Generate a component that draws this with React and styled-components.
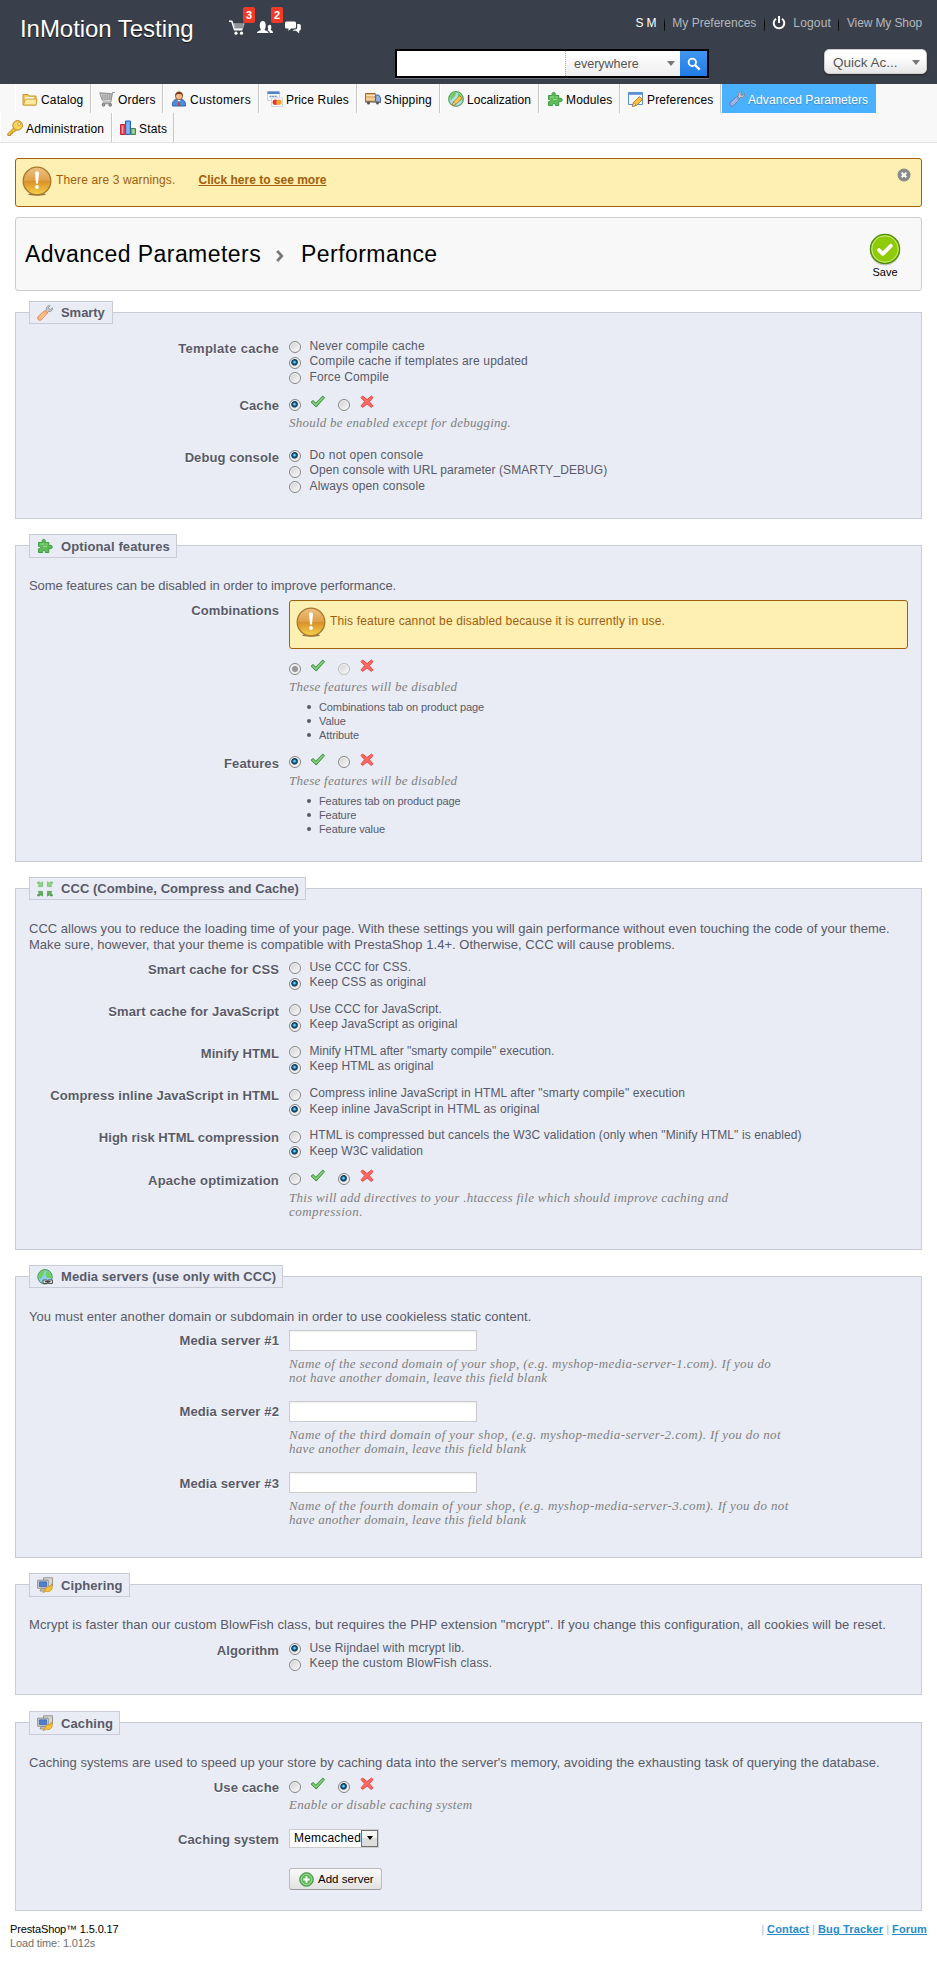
import React from 'react';
import styled, { createGlobalStyle, css } from 'styled-components';

const GlobalStyle = createGlobalStyle`
  * { box-sizing: border-box; }
  body {
    margin: 0;
    background: #fff;
    color: #585a69;
    font: 12px "Liberation Sans", Arial, sans-serif;
  }
`;

const c = {
  text: '#585a69',
  panel: '#e9ecf4',
  panelLine: '#c9ccd8',
  warn: '#a0600c',
};

const Track = styled.span`
  white-space: nowrap;
  letter-spacing: ${(p) => p.$ls || 0}px;
`;

/* ---------- header ---------- */

const Header = styled.header`
  height: 84px;
  background: #3a404b;
  display: flex;
  flex-direction: column;
`;

const HeaderTop = styled.div`
  height: 49px;
  display: flex;
  align-items: flex-start;
  padding: 15px 15px 0 20px;
`;

const ShopName = styled.h1`
  margin: 0;
  width: 209px;
  font-weight: normal;
  font-size: 24px;
  line-height: 28px;
  letter-spacing: -0.05px;
  color: #fff;
  text-shadow: 0 1px 1px #111;
  white-space: nowrap;
`;

const Notices = styled.div`
  display: flex;
  gap: 12px;
  padding-top: 5px;
  flex: 1;
`;

const Notice = styled.div`
  position: relative;
  width: 16px;
  height: 16px;
`;

const Badge = styled.span`
  position: absolute;
  left: 14px;
  top: -13px;
  width: 12px;
  height: 16px;
  border-radius: 2px;
  background: #f13b26;
  color: #fff;
  font: bold 11px/16px "Liberation Sans", Arial, sans-serif;
  text-align: center;
`;

const UserLinks = styled.div`
  display: flex;
  align-items: center;
  height: 16px;
  line-height: 16px;
  color: #b4b7bc;
`;

const UserName = styled.span`
  color: #fff;
  margin-right: 8px;
  letter-spacing: -0.2px;
`;

const Divider = styled.i`
  width: 1px;
  height: 14px;
  margin: 2px ${(p) => p.$right || 7}px 0 0;
  background: linear-gradient(#3a404b, #000 50%, #15181c);
`;

const UserLink = styled.a`
  white-space: nowrap;
  letter-spacing: ${(p) => p.$ls || 0}px;
  margin-right: ${(p) => p.$after || 0}px;
`;

const HeaderBottom = styled.div`
  display: flex;
  align-items: flex-start;
  justify-content: space-between;
  padding: 0 10px 0 395px;
`;

const Search = styled.div`
  display: flex;
  width: 314px;
  height: 29px;
  border: 2px solid #000;
  background: #fff;
  box-shadow: 0 1px 0 #6b7078;
`;

const SearchInput = styled.div`
  width: 168px;
  background: #fff;
`;

const Scope = styled.div`
  display: flex;
  align-items: center;
  flex: 1;
  padding: 0 5px 0 8px;
  justify-content: space-between;
  border-left: 1px dotted #aaa;
  background: linear-gradient(#fff, #eee);
  color: #555;
  font-size: 12.5px;
`;

const Caret = styled.i`
  border: 4px solid transparent;
  border-top: 5px solid #777;
  border-bottom: 0;
`;

const SearchButton = styled.div`
  width: 27px;
  display: grid;
  place-items: center;
  background: linear-gradient(#4196ee, #1f7be6);
`;

const QuickAccess = styled.div`
  width: 103px;
  height: 25px;
  display: flex;
  align-items: center;
  justify-content: space-between;
  padding: 1px 6px 0 8px;
  border: 1px solid #ccc;
  border-radius: 5px;
  background: linear-gradient(#fff 30%, #e6e6e6);
  color: #555;
  font-size: 13.5px;
  box-shadow: 0 1px 2px #222;
`;

/* ---------- navigation ---------- */

const Nav = styled.nav`
  height: 59px;
  background: #f8f8f8;
  border-bottom: 1px solid #e3e3e3;
`;

const NavRow = styled.div`
  display: flex;
  height: 29px;
  padding-left: ${(p) => p.$left}px;
`;

const NavItem = styled.a`
  display: flex;
  align-items: center;
  gap: 3px;
  width: ${(p) => p.$w}px;
  padding: 2px 0 0 ${(p) => p.$pad || 8}px;
  border-right: 1px solid #c8c8c8;
  box-shadow: inset 1px 0 0 #fff;
  color: #000;
  white-space: nowrap;
  letter-spacing: ${(p) => p.$ls ?? 0.15}px;
  svg { flex: none; margin-top: -1px; }
  ${(p) => p.$active && css`
    margin-left: 1px;
    padding-left: 7px;
    border: 0;
    box-shadow: none;
    background: #49b1ff;
    color: #fff;
    text-shadow: 0 1px 1px #4a86b8;
  `}
`;

/* ---------- content ---------- */

const Content = styled.main`
  padding: 15px 15px 0;
`;

const AlertBox = styled.div`
  display: flex;
  align-items: flex-start;
  height: 49px;
  padding: ${(p) => (p.$inner ? 6 : 7)}px 10px 0 6px;
  border: 1px solid ${c.warn};
  border-radius: 3px;
  background: #feefb3;
  color: ${c.warn};
  line-height: 16px;
`;

const AlertText = styled.span`
  margin: 6px 0 0 4px;
  white-space: nowrap;
  letter-spacing: ${(p) => p.$ls}px;
`;

const AlertLink = styled.a`
  margin: 6px auto 0 23px;
  font-weight: bold;
  text-decoration: underline;
  white-space: nowrap;
`;

const CloseSlot = styled.span`
  display: flex;
  margin-top: 2px;
`;

const TitleBar = styled.div`
  display: flex;
  align-items: flex-start;
  height: 74px;
  margin: 10px 0 21px;
  padding: 22px 19px 0 9px;
  border: 1px solid #ccc;
  border-radius: 3px;
  background: #f8f8f8;
  color: #000;
`;

const Crumb = styled.span`
  width: ${(p) => p.$w}px;
  font-size: 23px;
  line-height: 28px;
  letter-spacing: 0.45px;
  text-shadow: 0 1px 0 #fff;
  white-space: nowrap;
`;

const Chevron = styled.svg`
  margin: 10px 17px 0 0;
`;

const SaveButton = styled.div`
  display: flex;
  flex-direction: column;
  align-items: center;
  width: 34px;
  margin: -7px 0 0 auto;
  font-size: 11px;
  line-height: 13px;
`;

const Panel = styled.section`
  height: ${(p) => p.$h}px;
  margin-bottom: ${(p) => p.$after}px;
  padding: 0 13px;
  border: 1px solid ${c.panelLine};
  background: ${c.panel};
`;

const LegendSlot = styled.div`
  display: flex;
  align-items: flex-start;
  height: ${(p) => (p.$plain ? 36.5 : 44)}px;
  margin-top: -12px;
`;

const Legend = styled.div`
  display: flex;
  align-items: center;
  width: ${(p) => p.$w}px;
  height: ${(p) => p.$tall ? 24 : 23}px;
  padding-left: 7px;
  border: 1px solid ${c.panelLine};
  background: ${c.panel};
  font-weight: bold;
  font-size: 13px;
  white-space: nowrap;
  letter-spacing: ${(p) => p.$ls}px;
  svg { flex: none; margin-right: 8px; }
`;

const Intro = styled.p`
  margin: 0 0 ${(p) => p.$after || 6.5}px;
  font-size: 13px;
  line-height: 16px;
`;

const Row = styled.div`
  display: grid;
  grid-template-columns: 250px 1fr;
  column-gap: 10px;
  margin-bottom: 11.2px;
`;

const Label = styled.div`
  padding-top: 3.2px;
  text-align: right;
  font-weight: bold;
  font-size: 13px;
  line-height: 16px;
  white-space: nowrap;
  letter-spacing: ${(p) => p.$ls ?? 0.09}px;
  text-shadow: 0 1px 0 #fff;
`;

const Option = styled.div`
  display: flex;
  gap: 8.5px;
  height: 15.5px;
  line-height: 16.5px;
`;

const Toggle = styled.div`
  display: flex;
  height: 15.5px;
  margin-top: ${(p) => p.$top || 0}px;
`;

const IconSlot = styled.span`
  display: flex;
  margin: 0 ${(p) => p.$r}px 0 ${(p) => p.$l}px;
`;

const Dot = styled.i`
  flex: none;
  width: 12px;
  height: 12px;
  margin-top: 3.5px;
  border: 1px solid ${(p) => (p.$off ? '#bbb' : '#858585')};
  border-radius: 50%;
  box-shadow: inset 0 0 0 1px #f6f6f6;
  background: ${(p) =>
    p.$on
      ? p.$off
        ? 'radial-gradient(circle at 50% 50%, #999 0 2.6px, #eee 3.6px)'
        : 'radial-gradient(circle at 45% 42%, #7fd0f0 0 0.6px, #1a6c9c 1.6px, #0c3350 2.8px, #e8e8e8 3.9px)'
      : 'linear-gradient(135deg, #cfcfcf, #fbfbfb)'};
  ${(p) => p.$on && p.$off && css`border-color: #858585;`}
`;

const HintLines = styled.div`
  margin: ${(p) => (p.$tight ? 5.2 : 5.7)}px 0 ${(p) => (p.$tight ? 0 : 5.3)}px;
  color: #7f7f7f;
  font: italic 13px/14px "Liberation Serif", Georgia, serif;
`;

const HintLine = styled.div`
  white-space: nowrap;
  letter-spacing: ${(p) => p.$ls ?? 0.27}px;
`;

const Bullets = styled.ul`
  margin: 6px 0 0;
  padding: 0 0 0 18px;
  list-style: none;
  font-size: 11px;
  line-height: 14px;
  letter-spacing: -0.1px;
`;

const Bullet = styled.li`
  display: flex;
  align-items: center;
  gap: 8px;
  &::before {
    content: "";
    width: 4px;
    height: 4px;
    border-radius: 50%;
    background: ${c.text};
  }
`;

const TextInput = styled.div`
  width: 188px;
  height: 21px;
  border: 1px solid #ccc;
  background: #fff;
  box-shadow: inset 0 1px 2px #eee;
`;

const SelectBox = styled.div`
  display: flex;
  align-items: center;
  justify-content: space-between;
  width: 90px;
  height: 19px;
  margin-bottom: 20.5px;
  padding-left: 4px;
  border: 1px solid #ccc;
  background: #fff;
  color: #000;
  letter-spacing: 0.18px;
`;

const SelectArrow = styled.i`
  display: grid;
  place-items: center;
  width: 17px;
  height: 17px;
  border: 1px solid #707070;
  background: linear-gradient(#f4f4f4 50%, #ddd 50%);
  &::after {
    content: "";
    border: 3.5px solid transparent;
    border-top: 4px solid #000;
    border-bottom: 0;
  }
`;

const AddButton = styled.div`
  display: flex;
  align-items: center;
  gap: 4px;
  width: 93px;
  height: 22px;
  padding-left: 9px;
  border: 1px solid #bbb;
  border-bottom-color: #999;
  border-radius: 3px;
  background: linear-gradient(#fafafa, #e2e2e2);
  color: #000;
  font-size: 11.5px;
  white-space: nowrap;
`;

const Footer = styled.footer`
  display: flex;
  justify-content: space-between;
  padding: 11px 10px 0;
  font-size: 11px;
  line-height: 14px;
`;

const Version = styled.div`
  color: #000;
  letter-spacing: -0.14px;
`;

const LoadTime = styled.div`
  color: #6f6f6f;
  letter-spacing: -0.14px;
`;

const FooterLinks = styled.div`
  display: flex;
  gap: 3px;
  color: #8cc3ea;
  a {
    color: #268ccd;
    font-weight: bold;
    text-decoration: underline;
    letter-spacing: 0.15px;
  }
`;

/* ---------- icons ---------- */

const Svg = ({ s = 16, children, ...rest }) => (
  <svg width={s} height={s} viewBox="0 0 16 16" fill="none" {...rest}>{children}</svg>
);

const Folder = () => (
  <Svg>
    <path d="M1 3.5h5l1 1.5h7v9H1z" fill="#f5c95a" stroke="#c9962a" />
    <path d="M3 7h9" stroke="#fff" strokeWidth="2" />
    <path d="M1.5 14l1.800-6H15l-1 6z" fill="#fde9a0" stroke="#d3a23a" />
  </Svg>
);
const CartGray = () => (
  <Svg>
    <path d="M.5 1.800l12 .8M15.800 1.500h-2.300l-1.700 9.500H3.800" stroke="#8a8a8a" />
    <path d="M.8 2.500l2.400 6.700 8.600-.6 1-5.400z" fill="#dcdcdc" stroke="#999" />
    <path d="M3.800 3v6M6 3v6M8.200 3v6M10.400 3v5.600M1.600 5h10.800M2.200 7h9.800" stroke="#909090" strokeWidth=".7" />
    <path d="M3 12.500h9.500" stroke="#999" strokeWidth="1.500" />
    <circle cx="4.500" cy="14" r="1.300" fill="#aaa" stroke="#777" />
    <circle cx="11.200" cy="14" r="1.300" fill="#aaa" stroke="#777" />
  </Svg>
);
const Customer = () => (
  <Svg>
    <path d="M1.500 15c-.6-4 1.500-6.500 4-6.500h4.500c3 0 5 2.500 4.500 6.500z" fill="#4a8fd8" stroke="#2a62a8" />
    <path d="M6 8.500l2 2.500 2-2.500z" fill="#fff" />
    <path d="M7.500 10.500h1l.7 3.500L8 15l-1.200-1z" fill="#d33" />
    <circle cx="8" cy="5.200" r="3.600" fill="#f0b98a" stroke="#8a4a20" strokeWidth=".8" />
    <path d="M4 5c0-3 2-4.600 4-4.600S12 2 12 5c-1-1.600-2-2-4-2S5 3.400 4 5z" fill="#7a3c14" />
  </Svg>
);
const Cards = () => (
  <Svg>
    <path d="M.5.5h12v9h-12z" fill="#f4f7fc" stroke="#c8d4e4" />
    <path d="M.5.5h12v2.500h-12z" fill="#4f83c6" />
    <path d="M2.500 5.500h8" stroke="#6c93cc" strokeWidth="1.300" strokeDasharray="2 .6" />
    <path d="M4.500 7h11v8.500h-11z" fill="#fff" stroke="#d4d7da" />
    <circle cx="8.300" cy="11.200" r="2.700" fill="#e8352c" />
    <circle cx="12" cy="11.200" r="2.700" fill="#f6a32a" />
  </Svg>
);
const Truck = () => (
  <Svg>
    <path d="M.5 2.500h9.700v8H.5z" fill="#e8b678" stroke="#9a6a34" />
    <path d="M1 4.500h9M1 8h9" stroke="#fbe3c0" strokeWidth="1.200" />
    <path d="M10.700 4h3l1.800 3v4.500h-4.800z" fill="#8fb3e4" stroke="#3f66a8" />
    <path d="M0 11h15.500" stroke="#777" strokeWidth="1.200" />
    <circle cx="3.500" cy="12" r="1.500" fill="#555" /><circle cx="12.500" cy="12" r="1.500" fill="#555" />
  </Svg>
);
const Globe = () => (
  <Svg>
    <circle cx="8" cy="8" r="7.300" fill="#a9dff0" stroke="#5aa653" strokeWidth="1.300" />
    <path d="M2 5c2-3.500 5-4 6.500-3.600L7 5 4 8 2.600 10zM10 2c3 1.500 4.500 4 4 7l-2 1-2-3z" fill="#74c95e" />
    <path d="M4.500 14.500l1-3.600 6.200-6.200 2.400 2.400-6.200 6.200z" fill="#ffc84a" stroke="#b57a18" strokeWidth=".9" />
    <path d="M4.500 14.500l1-3.600 2.400 2.400z" fill="#fbe6c2" stroke="#8a6a3a" strokeWidth=".6" />
  </Svg>
);
const Puzzle = () => (
  <Svg>
    <path
      d="M1.500 4.500h3.700V3.200C4.500.8 8.800.8 8.200 3.200v1.300h3.600v3.200c1-.6 3.400-.8 3.400 1.300 0 2-2.200 1.900-3.400 1.300v4.200H8.300c.4-2.800-3-2.800-2.600 0H1.500v-3.700c2.500.6 2.500-3.100 0-2.500z"
      fill="#5fba5a" stroke="#3c9a42"
    />
    <path d="M3 6h4M8.500 6h2M6 8.500h4" stroke="#9ade8e" />
  </Svg>
);
const Prefs = () => (
  <Svg>
    <path d="M.5 1.500h14v12H.5z" fill="#f5f9ff" stroke="#5a8fd6" />
    <path d="M.5 1.500h14v2.300H.5z" fill="#5a8fd6" />
    <path d="M4.500 15.300l1-3.800 6-6 3 3-6 6z" fill="#ffbe3c" stroke="#b57a18" strokeWidth=".9" />
    <path d="M4.500 15.300l1-3.800 2.800 2.800z" fill="#fbe6c2" stroke="#8a6a3a" strokeWidth=".6" />
  </Svg>
);
const Tools = ({ handle = '#fbb078', edge = '#e58a4a', steel = '#c6cace', line = '#858b90' }) => (
  <Svg>
    <path d="M7.300 7.200L9.500 5C8.600 2.500 10.500.3 13.200.7l-1.700 2 .6 1.400 1.500.3L15.600 2.800c.3 2.500-1.700 4.200-4 3.800L8.800 9z" fill={steel} stroke={line} strokeWidth=".8" />
    <path d="M1 11.700L6.500 6.400a2 2 0 0 1 3 3L4.200 14.900c-1.900 1.600-4.700-1.200-3.200-3.200z" fill={handle} stroke={edge} strokeWidth=".9" />
    <path d="M2.800 12.300l5-4.800M4.200 13.500l4.500-4.500" stroke="#fff" strokeOpacity=".5" strokeWidth=".8" />
  </Svg>
);
const Key = () => (
  <Svg>
    <path d="M7.500 7L.8 13.800v1.600h3v-1.700h1.600v-1.600H7l2.800-2.400z" fill="#f4c53c" stroke="#a87414" strokeWidth=".8" />
    <circle cx="10.600" cy="5.400" r="4.800" fill="#fbd552" stroke="#b07c18" strokeWidth=".9" />
    <circle cx="12.200" cy="3.900" r="1.400" fill="#fff" stroke="#b07c18" strokeWidth=".7" />
  </Svg>
);
const Bars = () => (
  <Svg>
    <path d="M.5 4.500h4.500v10H.5z" fill="#f0566a" stroke="#c42438" />
    <path d="M5.500 1h5v13.500h-5z" fill="#62a4f0" stroke="#2467c0" />
    <path d="M11 8.500h4.500v6H11z" fill="#8fc48a" stroke="#3f8a42" />
    <path d="M2.500 6v7M8 3v10M13.300 10v3" stroke="#fff" strokeOpacity=".4" />
  </Svg>
);
const Shrink = () => (
  <Svg>
    <g fill="#8ed67c" stroke="#5fb257" strokeWidth=".6">
      <path d="M.6 1h2l1.200 1.200L5.500.8V5.600H1.200L2.400 4 .6 2.400zM15.400 1h-2l-1.200 1.200L10.500.8V5.600h4.300L13.600 4l1.800-1.600z" />
    </g>
    <g fill="#5fae5a" stroke="#3c8841" strokeWidth=".6">
      <path d="M.6 15h2l1.200-1.200 1.700 1.400V10.400H1.200L2.400 12 .6 13.600zM15.400 15h-2l-1.200-1.200-1.700 1.400V10.400h4.300L13.600 12l1.800 1.600z" />
    </g>
  </Svg>
);
const WorldLink = () => (
  <Svg>
    <circle cx="8" cy="7.800" r="7.200" fill="#8ccdf0" stroke="#3f8f3f" />
    <path d="M1.500 6c1-3.500 4-5 6.500-5L6.500 5 4 10l-2-1zM9.500 2c3.500 1 5.300 4 5 7h-4l-2-3z" fill="#6fd05a" />
    <path d="M6 11h4.300v3.500H6zM11.200 11h4.300v3.500h-4.300z" fill="#ddd" stroke="#555" />
    <path d="M8 12.700h5.500" stroke="#333" strokeWidth="1.100" />
  </Svg>
);
const Computers = () => (
  <Svg>
    <path d="M6.500.8h9v8.500h-9z" fill="#d6d6d2" stroke="#96968e" />
    <path d="M9 10h6v3H9z" fill="#b8b8b0" />
    <path d="M.7 3.200h10.500v8H.7z" fill="#e6e6e2" stroke="#8a8a84" />
    <path d="M2.300 4.800h7.300v4.800H2.300z" fill="#4f7fd0" stroke="#2f57a0" strokeWidth=".7" />
    <path d="M3 14l1-2.300h4.500l1 2.300z" fill="#c8c8c0" stroke="#85857d" strokeWidth=".8" />
    <path d="M6 15.500l4.500-6 2 .5 2.500-3.300v5.500l-2.500 2.300-3-.3z" fill="#fbc437" stroke="#d09018" strokeWidth=".8" />
  </Svg>
);
const Check = () => (
  <svg width="16" height="14" viewBox="0 0 16 14">
    <path d="M1 7.200l2-1.700 2.800 2.600L12.800 1l1.800 1.600L6.200 12z" fill="#6cbd64" stroke="#3c9543" />
    <path d="M2.500 7l3.300 3L13.200 2.300" fill="none" stroke="#a4df98" strokeWidth=".8" />
  </svg>
);
const Cross = () => (
  <svg width="14" height="14" viewBox="0 0 14 14">
    <path d="M1 2.600L2.600 1 7 4.600 11.400 1 13 2.600 9.400 6.700l3.600 4.200-1.600 1.600L7 8.900l-4.400 3.600L1 10.900l3.600-4.200z" fill="#fa6a64" stroke="#ee4545" />
  </svg>
);
const WarnIcon = () => (
  <svg width="30" height="30" viewBox="0 0 30 30">
    <defs>
      <linearGradient id="amber" x1="0" y1="0" x2="0" y2="1">
        <stop offset="0" stopColor="#eec284" /><stop offset=".48" stopColor="#dfa047" />
        <stop offset=".52" stopColor="#d8922a" /><stop offset="1" stopColor="#f8d04a" />
      </linearGradient>
    </defs>
    <ellipse cx="15" cy="28.300" rx="9" ry="1.400" fill="#8a7a50" />
    <circle cx="15" cy="15" r="13.800" fill="url(#amber)" stroke="#a8792c" strokeWidth="1.300" />
    <path d="M13 6.800c0-1.600 4-1.600 4 0L16 17.500h-2z" fill="#fff" />
    <circle cx="15" cy="21" r="1.900" fill="#fff" />
  </svg>
);
const CloseIcon = () => (
  <svg width="14" height="14" viewBox="0 0 14 14">
    <circle cx="7" cy="7" r="6.500" fill="#8a8a8a" />
    <path d="M4.700 4.700l4.600 4.600M9.300 4.700L4.700 9.300" stroke="#fff" strokeWidth="2" />
  </svg>
);
const SaveIcon = () => (
  <svg width="32" height="33" viewBox="0 0 32 33">
    <ellipse cx="16" cy="18" rx="15" ry="14.500" fill="#ccc" />
    <circle cx="16" cy="16" r="14.600" fill="#8fcb0a" stroke="#4f8f10" strokeWidth="1.300" />
    <circle cx="16" cy="16" r="13.200" fill="none" stroke="#cdea7a" strokeWidth="1" />
    <path d="M10 17l3.800 3.800 8-8" fill="none" stroke="#fff" strokeWidth="3.800" strokeLinecap="round" strokeLinejoin="round" />
  </svg>
);
const PlusIcon = () => (
  <svg width="15" height="15" viewBox="0 0 15 15">
    <circle cx="7.500" cy="7.500" r="6.800" fill="#62b85c" stroke="#3f9442" />
    <circle cx="7.500" cy="7.500" r="5.300" fill="none" stroke="#b4e2ac" strokeWidth=".8" />
    <path d="M7.500 4.300v6.400M4.300 7.500h6.400" stroke="#fff" strokeWidth="2" />
  </svg>
);
const CartWhite = () => (
  <Svg>
    <path d="M0 1.200h2.800l2.700 8.600h8" stroke="#fff" strokeWidth="1.500" />
    <path d="M4 3.500h11.500L13.800 9H5.600z" fill="#e8e8e8" />
    <path d="M4.500 5h10.500M5 7h9.500M7 3.500v5M9 3.500v5M11 3.500v5M13 3.500v5" stroke="#3a404b" strokeWidth=".6" />
    <circle cx="7" cy="13.200" r="1.600" fill="#fff" /><circle cx="12.500" cy="13.200" r="1.600" fill="#fff" />
  </Svg>
);
const People = () => (
  <Svg>
    <path d="M0 13c0-2 2.800-2 4-3-1.700-2.700-2-9 1.800-9s3.500 6.300 1.700 9C8.700 11 11.500 11 11.500 13zM12.800 13c0-1.700-1-2.300-2.300-2.800 1-1.500.5-2.200.3-3.200-.3-2 2.700-3.500 3.400-1 .4 1.600 0 2.800-.6 3.800.6.800 2.400.9 2.400 3.200z" fill="#fff" />
  </Svg>
);
const Chat = () => (
  <Svg>
    <path d="M1.500 1.500h8q1.500 0 1.500 1.500v4q0 1.500-1.500 1.500H6L3.500 11V8.500h-2Q0 8.500 0 7V3q0-1.500 1.500-1.500z" fill="#fff" />
    <path d="M12.200 4H14q1.800 0 1.800 1.500V9q0 1.700-1.600 1.700V13.500L11 10.700H7.500l1.800-1.200h1.200q1.700 0 1.700-1.700z" fill="#fff" />
  </Svg>
);
const Power = () => (
  <svg width="14" height="14" viewBox="0 0 14 14">
    <path d="M4 2.700a5.300 5.300 0 1 0 6 0" fill="none" stroke="#fff" strokeWidth="2" />
    <path d="M7 0v7" stroke="#fff" strokeWidth="2" />
  </svg>
);
const Magnifier = () => (
  <svg width="14" height="14" viewBox="0 0 14 14" fill="none" stroke="#fff">
    <circle cx="5.300" cy="5.300" r="3.700" strokeWidth="1.800" />
    <path d="M8 8l4.700 4.700" strokeWidth="2.400" />
  </svg>
);

/* ---------- composed parts ---------- */

const Radios = ({ items }) => items.map(([text, on, ls]) => (
  <Option key={text}><Dot $on={on} /><Track $ls={ls ?? 0.12}>{text}</Track></Option>
));

const YesNo = ({ yes, off, top }) => (
  <Toggle $top={top}>
    <Dot $on={yes} $off={off} />
    <IconSlot $l={9} $r={12}><Check /></IconSlot>
    <Dot $on={!yes} $off={off} />
    <IconSlot $l={10} $r={0}><Cross /></IconSlot>
  </Toggle>
);

const Hint = ({ lines, tight }) => (
  <HintLines $tight={tight}>
    {lines.map(([t, ls]) => <HintLine key={t} $ls={ls}>{t}</HintLine>)}
  </HintLines>
);

const Fieldset = ({ icon, title, w, ls, tall, plain, h, after, children }) => (
  <Panel $h={h} $after={after}>
    <LegendSlot $plain={plain}>
      <Legend $w={w} $ls={ls} $tall={tall}>{icon}{title}</Legend>
    </LegendSlot>
    {children}
  </Panel>
);

const Field = ({ label, ls, children }) => (
  <Row><Label $ls={ls}>{label}</Label><div>{children}</div></Row>
);

const cccRows = [
  ['Smart cache for CSS', [['Use CCC for CSS.', false, 0.15], ['Keep CSS as original', true]], 0.13],
  ['Smart cache for JavaScript', [['Use CCC for JavaScript.', false, 0.07], ['Keep JavaScript as original', true, 0.1]], 0.12],
  ['Minify HTML', [['Minify HTML after "smarty compile" execution.', false, 0], ['Keep HTML as original', true]]],
  ['Compress inline JavaScript in HTML', [['Compress inline JavaScript in HTML after "smarty compile" execution', false, 0.11], ['Keep inline JavaScript in HTML as original', true]], 0.1],
  ['High risk HTML compression', [['HTML is compressed but cancels the W3C validation (only when "Minify HTML" is enabled)', false, 0.1], ['Keep W3C validation', true, 0.08]], 0.02],
];

const servers = [
  ['Media server #1', [['Name of the second domain of your shop, (e.g. myshop-media-server-1.com). If you do', 0.38], ['not have another domain, leave this field blank', 0.29]]],
  ['Media server #2', [['Name of the third domain of your shop, (e.g. myshop-media-server-2.com). If you do not', 0.38], ['have another domain, leave this field blank', 0.29]]],
  ['Media server #3', [['Name of the fourth domain of your shop, (e.g. myshop-media-server-3.com). If you do not', 0.385], ['have another domain, leave this field blank', 0.29]]],
];

export default function App() {
  return (
    <>
      <GlobalStyle />
      <Header>
        <HeaderTop>
          <ShopName>InMotion Testing</ShopName>
          <Notices>
            <Notice><CartWhite /><Badge>3</Badge></Notice>
            <Notice><People /><Badge>2</Badge></Notice>
            <Notice><Chat /></Notice>
          </Notices>
          <UserLinks>
            <UserName>S M</UserName>
            <Divider />
            <UserLink $after={8}>My Preferences</UserLink>
            <Divider />
            <Power />
            <UserLink $ls={0.15} $after={7}>&nbsp;&nbsp;Logout</UserLink>
            <Divider $right={8} />
            <UserLink $ls={-0.12}>View My Shop</UserLink>
          </UserLinks>
        </HeaderTop>
        <HeaderBottom>
          <Search>
            <SearchInput />
            <Scope>everywhere<Caret /></Scope>
            <SearchButton><Magnifier /></SearchButton>
          </Search>
          <QuickAccess>Quick Ac...<Caret /></QuickAccess>
        </HeaderBottom>
      </Header>

      <Nav>
        <NavRow $left={15}>
          <NavItem $w={76} $pad={7}><Folder />Catalog</NavItem>
          <NavItem $w={72}><CartGray />Orders</NavItem>
          <NavItem $w={96} $ls={0.33}><Customer />Customers</NavItem>
          <NavItem $w={98}><Cards />Price Rules</NavItem>
          <NavItem $w={83}><Truck />Shipping</NavItem>
          <NavItem $w={99} $ls={0.05}><Globe />Localization</NavItem>
          <NavItem $w={81}><Puzzle />Modules</NavItem>
          <NavItem $w={101}><Prefs />Preferences</NavItem>
          <NavItem $w={154} $ls={0.07} $active>
            <Tools handle="#8fa8e0" edge="#5f78b8" steel="#c8c4c4" line="#8a7f7f" />Advanced Parameters
          </NavItem>
        </NavRow>
        <NavRow $left={0}>
          <NavItem $w={112} $pad={7}><Key />Administration</NavItem>
          <NavItem $w={62}><Bars />Stats</NavItem>
        </NavRow>
      </Nav>

      <Content>
        <AlertBox>
          <WarnIcon />
          <AlertText $ls={0.13}>There are 3 warnings.</AlertText>
          <AlertLink>Click here to see more</AlertLink>
          <CloseSlot><CloseIcon /></CloseSlot>
        </AlertBox>

        <TitleBar>
          <Crumb $w={251}>Advanced Parameters</Crumb>
          <Chevron width="8" height="12" viewBox="0 0 8 12">
            <path d="M1.200 1L5.800 6 1.200 11" fill="none" stroke="#777" strokeWidth="2.700" />
          </Chevron>
          <Crumb $w={150}>Performance</Crumb>
          <SaveButton><SaveIcon />Save</SaveButton>
        </TitleBar>

        <Fieldset icon={<Tools />} title="Smarty" w={84} ls={-0.05} plain h={207} after={26}>
          <Field label="Template cache" ls={0.3}>
            <Radios items={[['Never compile cache', false, 0.17], ['Compile cache if templates are updated', true, 0.185], ['Force Compile', false]]} />
          </Field>
          <Field label="Cache">
            <YesNo yes />
            <Hint lines={[['Should be enabled except for debugging.', 0.25]]} />
          </Field>
          <Field label="Debug console">
            <Radios items={[['Do not open console', true, 0.2], ['Open console with URL parameter (SMARTY_DEBUG)', false, 0.08], ['Always open console', false, 0.15]]} />
          </Field>
        </Fieldset>

        <Fieldset icon={<Puzzle />} title="Optional features" w={148} ls={0.12} tall h={317} after={26}>
          <Intro $after={6}><Track $ls={-0.07}>Some features can be disabled in order to improve performance.</Track></Intro>
          <Field label="Combinations">
            <AlertBox $inner>
              <WarnIcon />
              <AlertText $ls={0.15}>This feature cannot be disabled because it is currently in use.</AlertText>
            </AlertBox>
            <YesNo yes off top={10} />
            <Hint tight lines={[['These features will be disabled', 0.25]]} />
            <Bullets>
              <Bullet>Combinations tab on product page</Bullet>
              <Bullet>Value</Bullet>
              <Bullet>Attribute</Bullet>
            </Bullets>
          </Field>
          <Field label="Features">
            <YesNo yes />
            <Hint tight lines={[['These features will be disabled', 0.25]]} />
            <Bullets>
              <Bullet>Features tab on product page</Bullet>
              <Bullet>Feature</Bullet>
              <Bullet>Feature value</Bullet>
            </Bullets>
          </Field>
        </Fieldset>

        <Fieldset icon={<Shrink />} title="CCC (Combine, Compress and Cache)" w={277} ls={0.05} h={362} after={26}>
          <Intro $after={5.5}>
            <Track $ls={0.01}>CCC allows you to reduce the loading time of your page. With these settings you will gain performance without even touching the code of your theme.</Track><br />
            <Track $ls={0.03}>Make sure, however, that your theme is compatible with PrestaShop 1.4+. Otherwise, CCC will cause problems.</Track>
          </Intro>
          {cccRows.map(([label, items, ls]) => (
            <Field key={label} label={label} ls={ls}><Radios items={items} /></Field>
          ))}
          <Field label="Apache optimization" ls={0.2}>
            <YesNo />
            <Hint lines={[['This will add directives to your .htaccess file which should improve caching and', 0.28], ['compression.', 0.45]]} />
          </Field>
        </Fieldset>

        <Fieldset icon={<WorldLink />} title="Media servers (use only with CCC)" w={254} ls={0.06} h={282} after={26}>
          <Intro $after={5}><Track $ls={0.05}>You must enter another domain or subdomain in order to use cookieless static content.</Track></Intro>
          {servers.map(([label, lines]) => (
            <Field key={label} label={label} ls={0.13}>
              <TextInput />
              <Hint lines={lines} />
            </Field>
          ))}
        </Fieldset>

        <Fieldset icon={<Computers />} title="Ciphering" w={101} ls={0.1} tall h={111} after={27}>
          <Intro><Track $ls={0.085}>Mcrypt is faster than our custom BlowFish class, but requires the PHP extension "mcrypt". If you change this configuration, all cookies will be reset.</Track></Intro>
          <Field label="Algorithm">
            <Radios items={[['Use Rijndael with mcrypt lib.', true, 0.15], ['Keep the custom BlowFish class.', false, 0.22]]} />
          </Field>
        </Fieldset>

        <Fieldset icon={<Computers />} title="Caching" w={91} ls={0.1} tall h={189} after={0}>
          <Intro $after={6}><Track $ls={0.025}>Caching systems are used to speed up your store by caching data into the server's memory, avoiding the exhausting task of querying the database.</Track></Intro>
          <Field label="Use cache">
            <YesNo />
            <Hint lines={[['Enable or disable caching system']]} />
          </Field>
          <Field label="Caching system">
            <SelectBox>Memcached<SelectArrow /></SelectBox>
            <AddButton><PlusIcon />Add server</AddButton>
          </Field>
        </Fieldset>
      </Content>

      <Footer>
        <div>
          <Version>PrestaShop™ 1.5.0.17</Version>
          <LoadTime>Load time: 1.012s</LoadTime>
        </div>
        <FooterLinks>
          <span>|</span><a>Contact</a><span>|</span><a>Bug Tracker</a><span>|</span><a>Forum</a>
        </FooterLinks>
      </Footer>
    </>
  );
}
